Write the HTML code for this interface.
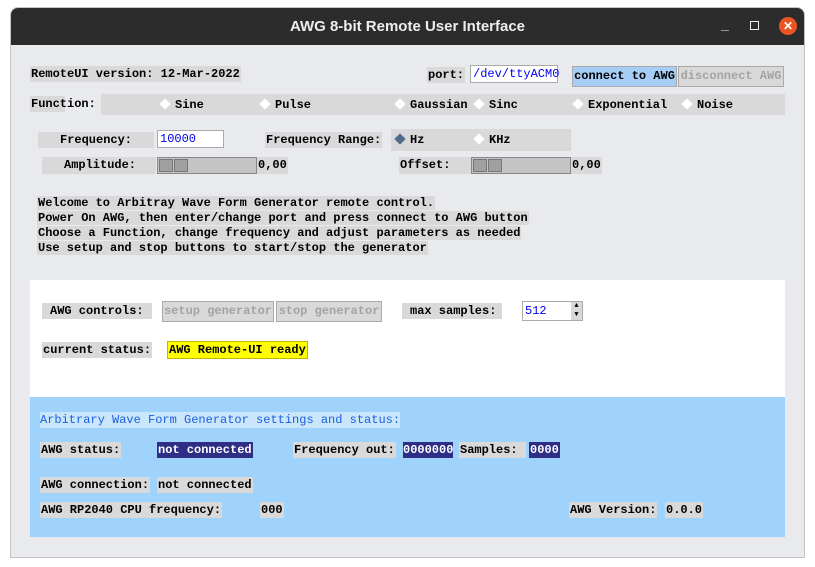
<!DOCTYPE html>
<html><head><meta charset="utf-8"><style>
*{margin:0;padding:0;box-sizing:border-box}
body{width:815px;height:567px;background:#fff;position:relative;overflow:hidden;font-family:"Liberation Mono",monospace;font-size:12px;font-weight:bold;color:#000}
.a{position:absolute;white-space:pre;line-height:16px}
.l{background:#d9d9d9;padding:0 1px}
.win{position:absolute;left:10px;top:7px;width:795px;height:551px;background:#e8eaee;border:1px solid #c4c4c4;border-radius:8px 8px 0 0;overflow:hidden}
.tb{position:absolute;left:0;top:0;width:100%;height:37px;background:#2c2c2c;color:#eee;font-family:"Liberation Sans",sans-serif;font-size:15px;text-align:center;line-height:37px}
.ent{background:#fff;color:#0000ee;border:1px solid #aaa;padding-left:2px;font-weight:normal}
.btn{text-align:center;line-height:19px;height:21px;border:1px solid #aaa}
.dia{display:inline-block;width:8px;height:8px;background:#fff;transform:rotate(45deg);margin:0 6px 0 3px;vertical-align:0}
.sl{background:#c4c4c4;height:17px;border:1px solid #888}
.sl i{position:absolute;top:1px;width:14px;height:13px;background:#a0a0a0;border:1px solid #777}
</style></head><body>
<div class="win">
<div class="tb">AWG 8-bit Remote User Interface
<span style="position:absolute;left:710px;top:-2px;font-size:14px">_</span>
<span style="position:absolute;left:739px;top:13px;width:9px;height:9px;border:1.5px solid #eee"></span>
<span style="position:absolute;left:768px;top:9px;width:18px;height:18px;border-radius:50%;background:#e95420;color:#fff;line-height:18px;font-size:12px">✕</span>
</div>
</div>
<div class="a l" style="left:30px;top:66px">RemoteUI version: 12-Mar-2022</div>
<div class="a l" style="left:427px;top:67px">port:</div>
<div class="a ent" style="left:470px;top:65px;width:88px;height:18px;line-height:16px">/dev/ttyACM0</div>
<div class="a btn" style="left:572px;top:66px;width:105px;background:#a6cdf6">connect to AWG</div>
<div class="a btn" style="left:678px;top:66px;width:106px;background:#d9d9d9;color:#a3a3a3">disconnect AWG</div>
<div class="a l" style="left:30px;top:96px;width:35px">Function:</div>
<div class="a l" style="left:101px;top:94px;width:684px;height:21px;padding:0"></div>
<div class="a" style="left:158px;top:97px"><span class="dia"></span>Sine</div>
<div class="a" style="left:258px;top:97px"><span class="dia"></span>Pulse</div>
<div class="a" style="left:393px;top:97px"><span class="dia"></span>Gaussian</div>
<div class="a" style="left:472px;top:97px"><span class="dia"></span>Sinc</div>
<div class="a" style="left:571px;top:97px"><span class="dia"></span>Exponential</div>
<div class="a" style="left:680px;top:97px"><span class="dia"></span>Noise</div>
<div class="a l" style="left:38px;top:132px;width:116px;padding-left:22px">Frequency:</div>
<div class="a ent" style="left:157px;top:130px;width:67px;height:18px">10000</div>
<div class="a l" style="left:265px;top:132px">Frequency Range:</div>
<div class="a l" style="left:391px;top:129px;width:180px;height:22px"></div>
<div class="a" style="left:393px;top:132px"><span class="dia" style="background:#4d6a8a"></span>Hz</div>
<div class="a" style="left:472px;top:132px"><span class="dia"></span>KHz</div>
<div class="a l" style="left:42px;top:157px;width:114px;height:17px;padding-left:22px">Amplitude:</div>
<div class="a sl" style="left:157px;top:157px;width:100px"><i style="left:1px"></i><i style="left:16px"></i></div>
<div class="a l" style="left:257px;top:157px;height:17px">0,00</div>
<div class="a l" style="left:399px;top:157px;width:72px;height:17px">Offset:</div>
<div class="a sl" style="left:471px;top:157px;width:100px"><i style="left:1px"></i><i style="left:16px"></i></div>
<div class="a l" style="left:571px;top:157px;height:17px">0,00</div>
<div class="a" style="left:37px;top:196px;line-height:15px"><span class="l">Welcome to Arbitray Wave Form Generator remote control.</span>
<span class="l">Power On AWG, then enter/change port and press connect to AWG button</span>
<span class="l">Choose a Function, change frequency and adjust parameters as needed</span>
<span class="l">Use setup and stop buttons to start/stop the generator</span></div>
<div class="a" style="left:30px;top:280px;width:755px;height:117px;background:#fff"></div>
<div class="a l" style="left:42px;top:303px;width:110px;padding-left:8px">AWG controls:</div>
<div class="a btn" style="left:162px;top:301px;width:112px;background:#d9d9d9;color:#a3a3a3">setup generator</div>
<div class="a btn" style="left:276px;top:301px;width:106px;background:#d9d9d9;color:#a3a3a3">stop generator</div>
<div class="a l" style="left:402px;top:303px;width:100px;padding-left:8px">max samples:</div>
<div class="a ent" style="left:522px;top:301px;width:61px;height:20px;line-height:18px">512</div>
<div class="a" style="left:571px;top:302px;width:11px;height:18px;background:#d9d9d9;font-size:7px;line-height:9px;text-align:center">▲<br>▼</div>
<div class="a l" style="left:42px;top:342px;width:110px">current status:</div>
<div class="a" style="left:167px;top:341px;background:#ffff00;border:1px solid #c8b400;padding:0 1px">AWG Remote-UI ready</div>
<div class="a" style="left:30px;top:397px;width:755px;height:140px;background:#9fd3fb"></div>
<div class="a" style="left:40px;top:412px;background:#c9e6fb;color:#1a5fe0;font-weight:normal">Arbitrary Wave Form Generator settings and status:</div>
<div class="a l" style="left:40px;top:442px">AWG status:</div>
<div class="a" style="left:157px;top:442px;background:#2e2e86;color:#fff;padding:0 1px">not connected</div>
<div class="a l" style="left:293px;top:442px">Frequency out:</div>
<div class="a" style="left:403px;top:442px;background:#2e2e86;color:#fff">0000000</div>
<div class="a l" style="left:459px;top:442px;width:67px">Samples:</div>
<div class="a" style="left:529px;top:442px;background:#2e2e86;color:#fff;padding:0 1px">0000</div>
<div class="a l" style="left:40px;top:477px">AWG connection:</div>
<div class="a l" style="left:157px;top:477px">not connected</div>
<div class="a l" style="left:40px;top:502px">AWG RP2040 CPU frequency:</div>
<div class="a l" style="left:260px;top:502px">000</div>
<div class="a l" style="left:569px;top:502px">AWG Version:</div>
<div class="a l" style="left:665px;top:502px">0.0.0</div>
</body></html>
